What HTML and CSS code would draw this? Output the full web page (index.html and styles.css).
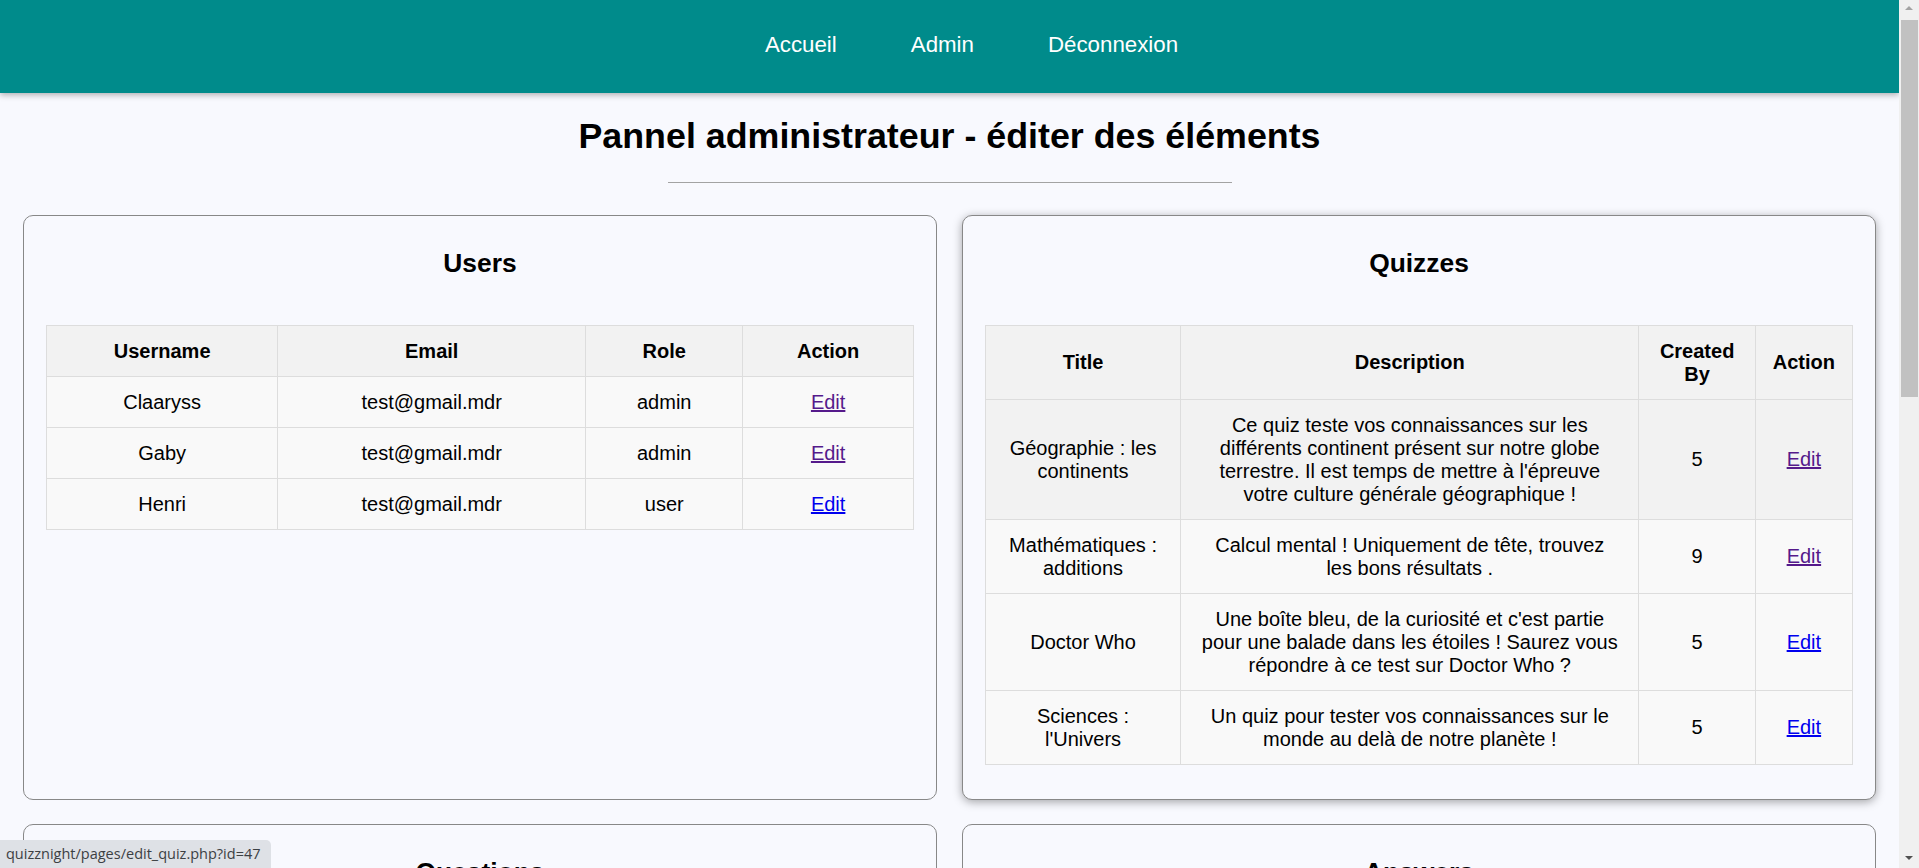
FILE: index.html
```html
<!DOCTYPE html>
<html lang="fr">
<head>
<meta charset="utf-8">
<title>Quizznight - Admin</title>
<link rel="stylesheet" href="styles.css">
</head>
<body>
<header class="navbar">
  <ul class="nav-list">
    <li><a href="#" class="nav-link">Accueil</a></li>
    <li><a href="#" class="nav-link">Admin</a></li>
    <li><a href="#" class="nav-link">Déconnexion</a></li>
  </ul>
</header>

<main class="page">
  <h1 class="page-title">Pannel administrateur - éditer des éléments</h1>
  <hr class="divider">

  <div class="panels">
    <section class="card">
      <h2 class="card-title">Users</h2>
      <table class="data-table">
        <thead>
          <tr><th>Username</th><th>Email</th><th>Role</th><th>Action</th></tr>
        </thead>
        <tbody>
          <tr><td>Claaryss</td><td>test@gmail.mdr</td><td>admin</td><td><a href="#" class="edit visited">Edit</a></td></tr>
          <tr><td>Gaby</td><td>test@gmail.mdr</td><td>admin</td><td><a href="#" class="edit visited">Edit</a></td></tr>
          <tr><td>Henri</td><td>test@gmail.mdr</td><td>user</td><td><a href="#" class="edit">Edit</a></td></tr>
        </tbody>
      </table>
    </section>

    <section class="card card-hover">
      <h2 class="card-title">Quizzes</h2>
      <table class="data-table">
        <thead>
          <tr><th>Title</th><th>Description</th><th>Created By</th><th>Action</th></tr>
        </thead>
        <tbody>
          <tr class="row-hover"><td>Géographie : les continents</td><td>Ce quiz teste vos connaissances sur les différents continent présent sur notre globe terrestre. Il est temps de mettre à l'épreuve votre culture générale géographique !</td><td>5</td><td><a href="#" class="edit visited">Edit</a></td></tr>
          <tr><td>Mathématiques : additions</td><td>Calcul mental ! Uniquement de tête, trouvez les&nbsp;bons résultats .</td><td>9</td><td><a href="#" class="edit visited">Edit</a></td></tr>
          <tr><td>Doctor Who</td><td>Une boîte bleu, de la curiosité et c'est partie pour une balade dans les étoiles ! Saurez vous répondre à ce test sur Doctor Who ?</td><td>5</td><td><a href="#" class="edit">Edit</a></td></tr>
          <tr><td>Sciences : l'Univers</td><td>Un quiz pour tester vos connaissances sur le monde au delà de notre planète !</td><td>5</td><td><a href="#" class="edit">Edit</a></td></tr>
        </tbody>
      </table>
    </section>

    <section class="card card-tall">
      <h2 class="card-title">Questions</h2>
      <table class="data-table">
        <thead>
          <tr><th>Question</th><th>Quiz</th><th>Action</th></tr>
        </thead>
        <tbody>
          <tr><td>Combien y a-t-il de continents ?</td><td>Géographie : les continents</td><td><a href="#" class="edit">Edit</a></td></tr>
          <tr><td>Quel est le plus grand continent ?</td><td>Géographie : les continents</td><td><a href="#" class="edit">Edit</a></td></tr>
          <tr><td>Combien font 12 + 7 ?</td><td>Mathématiques : additions</td><td><a href="#" class="edit">Edit</a></td></tr>
          <tr><td>Combien font 45 + 38 ?</td><td>Mathématiques : additions</td><td><a href="#" class="edit">Edit</a></td></tr>
          <tr><td>Comment s'appelle le vaisseau du Docteur ?</td><td>Doctor Who</td><td><a href="#" class="edit">Edit</a></td></tr>
          <tr><td>De quelle planète vient le Docteur ?</td><td>Doctor Who</td><td><a href="#" class="edit">Edit</a></td></tr>
          <tr><td>Quelle est la planète la plus proche du Soleil ?</td><td>Sciences : l'Univers</td><td><a href="#" class="edit">Edit</a></td></tr>
          <tr><td>Comment s'appelle notre galaxie ?</td><td>Sciences : l'Univers</td><td><a href="#" class="edit">Edit</a></td></tr>
        </tbody>
      </table>
    </section>

    <section class="card card-tall">
      <h2 class="card-title">Answers</h2>
      <table class="data-table">
        <thead>
          <tr><th>Answer</th><th>Correct</th><th>Question</th><th>Action</th></tr>
        </thead>
        <tbody>
          <tr><td>7</td><td>Oui</td><td>Combien y a-t-il de continents ?</td><td><a href="#" class="edit">Edit</a></td></tr>
          <tr><td>Asie</td><td>Oui</td><td>Quel est le plus grand continent ?</td><td><a href="#" class="edit">Edit</a></td></tr>
          <tr><td>19</td><td>Oui</td><td>Combien font 12 + 7 ?</td><td><a href="#" class="edit">Edit</a></td></tr>
          <tr><td>83</td><td>Oui</td><td>Combien font 45 + 38 ?</td><td><a href="#" class="edit">Edit</a></td></tr>
          <tr><td>TARDIS</td><td>Oui</td><td>Comment s'appelle le vaisseau du Docteur ?</td><td><a href="#" class="edit">Edit</a></td></tr>
          <tr><td>Gallifrey</td><td>Oui</td><td>De quelle planète vient le Docteur ?</td><td><a href="#" class="edit">Edit</a></td></tr>
          <tr><td>Mercure</td><td>Oui</td><td>Quelle est la planète la plus proche du Soleil ?</td><td><a href="#" class="edit">Edit</a></td></tr>
          <tr><td>La Voie lactée</td><td>Oui</td><td>Comment s'appelle notre galaxie ?</td><td><a href="#" class="edit">Edit</a></td></tr>
        </tbody>
      </table>
    </section>
  </div>
</main>

<div class="status-bubble">quizznight/pages/edit_quiz.php?id=47</div>

<div class="scrollbar" aria-hidden="true">
  <span class="sb-arrow sb-up"></span>
  <span class="sb-thumb"></span>
  <span class="sb-arrow sb-down"></span>
</div>
</body>
</html>
```

FILE: styles.css
```css
html {
  background: #f8f9fe;
}

body {
  margin: 0 20px 0 0;
  background: #f8f9fe;
  color: #000;
  font-family: "Liberation Sans", Arial, sans-serif;
}

.navbar {
  background: #008b8b;
  height: 93px;
  box-shadow: 0 2px 6px rgba(0, 0, 0, 0.3);
  position: relative;
  z-index: 1;
}

.nav-list {
  list-style: none;
  margin: 0;
  padding: 0 0 4px 44px;
  height: 100%;
  box-sizing: border-box;
  display: flex;
  justify-content: center;
  align-items: center;
  gap: 74px;
}

.nav-link {
  color: #fff;
  text-decoration: none;
  font-size: 22.3px;
}

.page {
  padding: 0 23px 40px;
}

.page-title {
  margin: 23px 0 25px;
  font-size: 35.8px;
  line-height: 41px;
  text-align: center;
  font-weight: bold;
}

.divider {
  width: 564px;
  margin: 0 auto 32px;
  border: 0;
  border-top: 1px solid #a3a3a3;
  height: 0;
}

.panels {
  display: grid;
  grid-template-columns: 1fr 1fr;
  column-gap: 25px;
  row-gap: 24px;
}

.card {
  border: 1px solid #888;
  border-radius: 10px;
  background: #f8f9fe;
  padding: 0 22px 34px;
}

.card-hover {
  box-shadow: 0 2px 10px rgba(0, 0, 0, 0.35);
}

.card-tall {
  min-height: 1000px;
}

.card-title {
  margin: 32px 0 47px;
  font-size: 26.4px;
  line-height: 30px;
  text-align: center;
  font-weight: bold;
}

.data-table {
  width: 100%;
  border-collapse: collapse;
  font-size: 20px;
}

.data-table th,
.data-table td {
  border: 1px solid #dddddd;
  padding: 13.5px 17px;
  text-align: center;
}

.data-table th {
  background: #f2f2f2;
  font-weight: bold;
}

.data-table td {
  background: #f9f9f9;
}

.data-table tr.row-hover td {
  background: #f2f2f2;
}

.edit {
  color: #0000ee;
  text-decoration: underline;
}

.edit.visited {
  color: #551a8b;
}

.status-bubble {
  position: fixed;
  left: 0;
  bottom: 0;
  height: 28px;
  line-height: 28px;
  padding: 0 10px 0 6px;
  background: #dee1e6;
  color: #3c4043;
  font-family: "Open Sans", "Noto Sans", sans-serif;
  font-size: 14.5px;
  border-top-right-radius: 5px;
  z-index: 5;
}

.scrollbar {
  position: fixed;
  top: 0;
  right: 0;
  width: 20px;
  height: 100vh;
  background: #f0f0f0;
  z-index: 6;
}

.sb-thumb {
  position: absolute;
  top: 20px;
  left: 2px;
  width: 17px;
  height: 377px;
  background: #c1c1c1;
}

.sb-arrow {
  position: absolute;
  left: 6px;
  width: 0;
  height: 0;
  border-left: 4px solid transparent;
  border-right: 4px solid transparent;
}

.sb-up {
  top: 6px;
  border-bottom: 4px solid #a3a3a3;
}

.sb-down {
  bottom: 8px;
  border-top: 4px solid #505050;
}
```
